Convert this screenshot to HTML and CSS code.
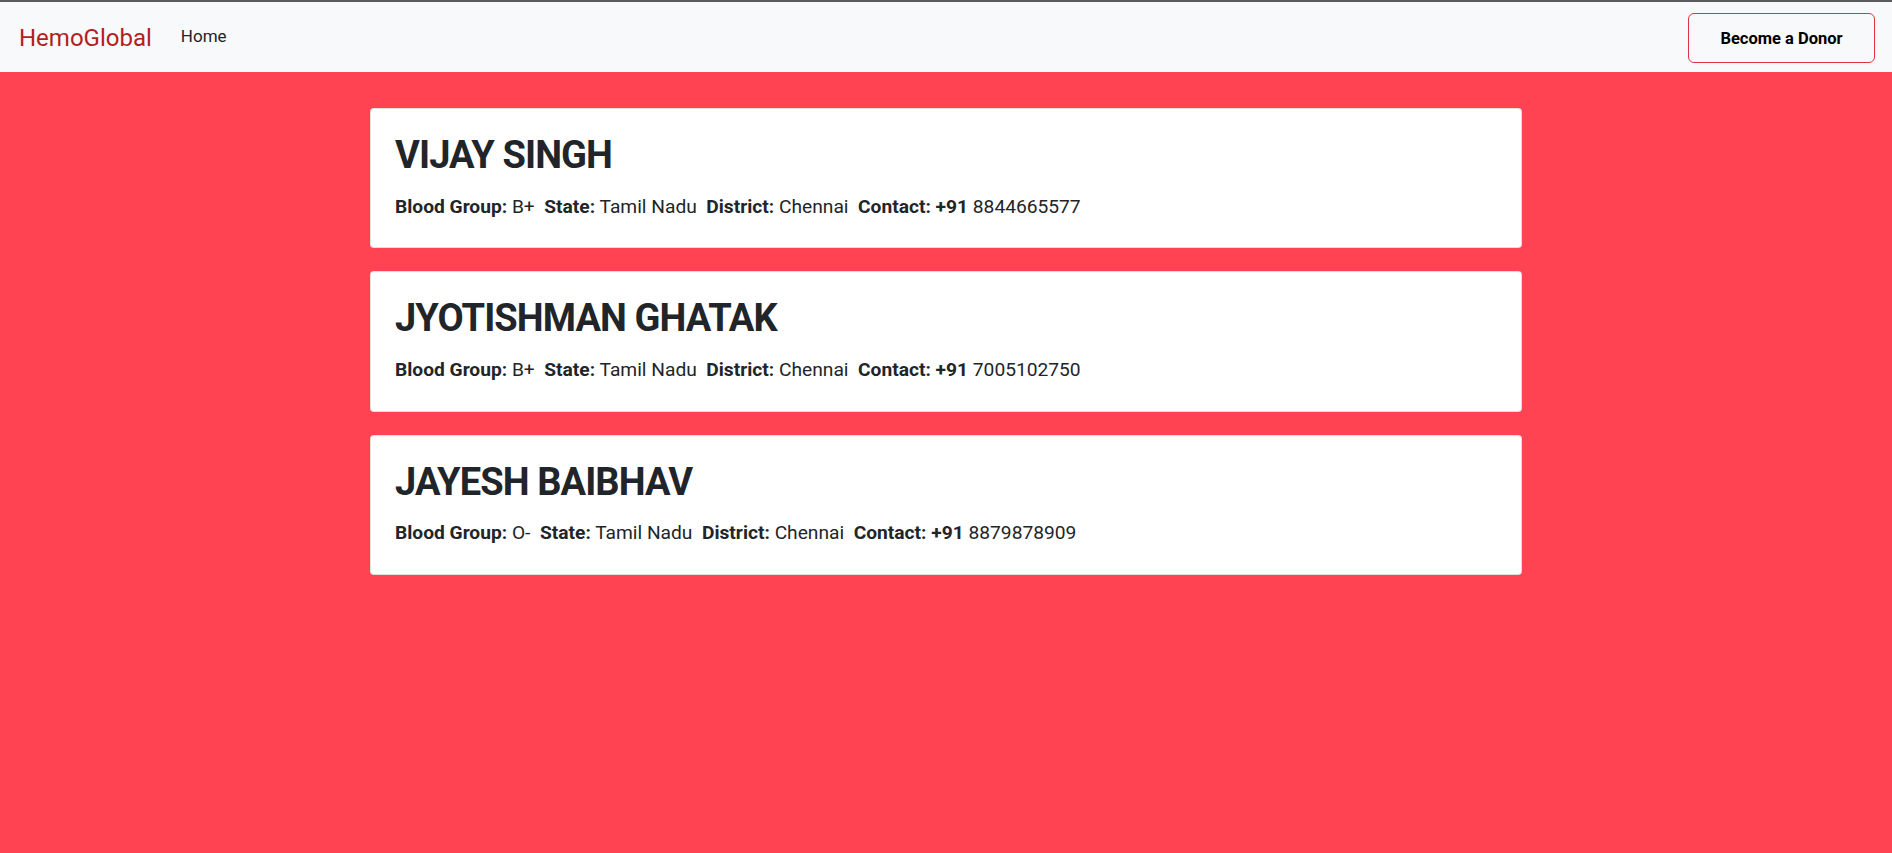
FILE: index.html
```html
<!DOCTYPE html>
<html lang="en">
<head>
<meta charset="utf-8">
<title>HemoGlobal</title>
<link rel="stylesheet" href="styles.css">
</head>
<body>
<nav class="navbar">
  <div class="nav-left">
    <a class="brand" href="#">HemoGlobal</a>
    <a class="nav-link" href="#">Home</a>
  </div>
  <button class="donor-btn" type="button">Become a Donor</button>
</nav>
<main class="list">
  <div class="card">
    <h1 class="name">VIJAY SINGH</h1>
    <p class="details"><b>Blood Group:</b> B+&nbsp; <b>State:</b> Tamil Nadu&nbsp; <b>District:</b> Chennai&nbsp; <b>Contact: +91</b> 8844665577</p>
  </div>
  <div class="card">
    <h1 class="name">JYOTISHMAN GHATAK</h1>
    <p class="details"><b>Blood Group:</b> B+&nbsp; <b>State:</b> Tamil Nadu&nbsp; <b>District:</b> Chennai&nbsp; <b>Contact: +91</b> 7005102750</p>
  </div>
  <div class="card">
    <h1 class="name">JAYESH BAIBHAV</h1>
    <p class="details"><b>Blood Group:</b> O-&nbsp; <b>State:</b> Tamil Nadu&nbsp; <b>District:</b> Chennai&nbsp; <b>Contact: +91</b> 8879878909</p>
  </div>
</main>
</body>
</html>
```
FILE: styles.css
```css
html, body {
  margin: 0;
  padding: 0;
}
body {
  min-height: 853px;
  background: #ff4352;
  font-family: Roboto, "Liberation Sans", Arial, sans-serif;
  color: #212529;
  border-top: 2px solid #5b5b5b;
  box-sizing: border-box;
}
.navbar {
  height: 70px;
  background: #f8f9fa;
  display: flex;
  align-items: center;
  justify-content: space-between;
  padding: 0 17px 0 19px;
  box-sizing: border-box;
}
.nav-left {
  display: flex;
  align-items: center;
  gap: 29px;
}
.brand {
  font-size: 24px;
  color: #b21f1f;
  text-decoration: none;
  line-height: 1;
  padding-top: 1px;
}
.nav-link {
  font-size: 17px;
  color: #212529;
  text-decoration: none;
  margin-top: -2px;
}
.donor-btn {
  width: 187px;
  height: 50px;
  margin-top: 2px;
  background: transparent;
  border: 1px solid #dc3545;
  border-radius: 6px;
  font-family: Roboto, "Liberation Sans", Arial, sans-serif;
  font-weight: 700;
  font-size: 16.5px;
  color: #000;
  cursor: pointer;
}
.list {
  width: 1152px;
  margin: 36px auto 0;
  display: flex;
  flex-direction: column;
  gap: 23px;
}
.card {
  background: #fff;
  border: 1px solid rgba(0,0,0,0.125);
  border-radius: 4px;
  padding: 24px 24px 26px;
}
.name {
  margin: 0 0 14px;
  font-size: 38px;
  letter-spacing: -0.9px;
  line-height: 1.2;
  font-weight: 700;
  color: #212529;
}
.details {
  margin: 0;
  font-size: 19.2px;
  line-height: 1.5;
  color: #212529;
}
.details b {
  font-weight: 700;
}
```
